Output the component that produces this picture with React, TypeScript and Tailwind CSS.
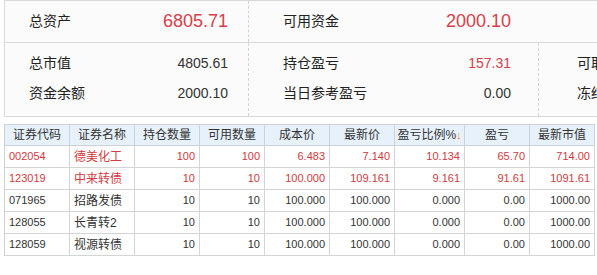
import React from 'react';

interface Position {
  code: string;
  name: string;
  qty: string;
  avail: string;
  cost: string;
  price: string;
  ratio: string;
  pnl: string;
  value: string;
  up: boolean;
}

const positions: Position[] = [
  { code: '002054', name: '德美化工', qty: '100', avail: '100', cost: '6.483', price: '7.140', ratio: '10.134', pnl: '65.70', value: '714.00', up: true },
  { code: '123019', name: '中来转债', qty: '10', avail: '10', cost: '100.000', price: '109.161', ratio: '9.161', pnl: '91.61', value: '1091.61', up: true },
  { code: '071965', name: '招路发债', qty: '10', avail: '10', cost: '100.000', price: '100.000', ratio: '0.000', pnl: '0.00', value: '1000.00', up: false },
  { code: '128055', name: '长青转2', qty: '10', avail: '10', cost: '100.000', price: '100.000', ratio: '0.000', pnl: '0.00', value: '1000.00', up: false },
  { code: '128059', name: '视源转债', qty: '10', avail: '10', cost: '100.000', price: '100.000', ratio: '0.000', pnl: '0.00', value: '1000.00', up: false },
];

const gridCols = 'grid grid-cols-[65px_65px_65px_65px_65px_65px_70px_65px_65px]';

const SummaryLine = ({ label, value, red }: { label: string; value: string; red?: boolean }) => (
  <div className="flex h-[30px] items-center justify-between">
    <span className="text-[14px] text-[#222]">{label}</span>
    <span className={`text-[14px] ${red ? 'text-[#d6404a]' : 'text-[#333]'}`}>{value}</span>
  </div>
);

const App: React.FC = () => {
  return (
    <div
      className="w-[597px] h-[275px] overflow-hidden bg-white"
      style={{ fontFamily: '"Liberation Sans", "Noto Sans CJK SC", sans-serif' }}
    >
      {/* account summary */}
      <div className="ml-[4px] w-[700px] border-l border-t border-b border-[#d9d9d9] bg-[#fbfbfb]">
        <div className="flex h-[42px] border-b border-[#d9d9d9]">
          <div className="flex w-[244px] items-center justify-between border-r border-dashed border-[#d4d4d4] pl-[24px] pr-[20px]">
            <span className="text-[14px] text-[#222]">总资产</span>
            <span className="text-[18px] text-[#d6404a]">6805.71</span>
          </div>
          <div className="flex w-[290px] items-center justify-between pl-[34px] pr-[28px]">
            <span className="text-[14px] text-[#222]">可用资金</span>
            <span className="text-[18px] text-[#d6404a]">2000.10</span>
          </div>
        </div>
        <div className="flex h-[73px]">
          <div className="w-[244px] border-r border-dashed border-[#d4d4d4] pl-[24px] pr-[20px] pt-[5px]">
            <SummaryLine label="总市值" value="4805.61" />
            <SummaryLine label="资金余额" value="2000.10" />
          </div>
          <div className="w-[290px] border-r border-dashed border-[#d4d4d4] pl-[34px] pr-[27px] pt-[5px]">
            <SummaryLine label="持仓盈亏" value="157.31" red />
            <SummaryLine label="当日参考盈亏" value="0.00" />
          </div>
          <div className="pl-[38px] pt-[5px]">
            <div className="flex h-[30px] items-center text-[14px] text-[#222]">可取资金</div>
            <div className="flex h-[30px] items-center text-[14px] text-[#222]">冻结资金</div>
          </div>
        </div>
      </div>

      {/* positions table */}
      <div className="ml-[4px] mt-[7px] w-[591px] border-l border-t border-[#cdd2d8]">
        <div className={`${gridCols} h-[21px] border-b border-[#cdd2d8] bg-[#e7f1fb] text-[12px] text-[#333]`}>
          {['证券代码', '证券名称', '持仓数量', '可用数量', '成本价', '最新价'].map((h) => (
            <div key={h} className="flex items-center justify-center border-r border-[#cdd2d8]">
              {h}
            </div>
          ))}
          <div className="flex items-center justify-center whitespace-nowrap border-r border-[#cdd2d8]">
            盈亏比例%<span className="text-[11px] font-bold text-[#f08a1c]">↓</span>
          </div>
          {['盈亏', '最新市值'].map((h) => (
            <div key={h} className="flex items-center justify-center border-r border-[#cdd2d8]">
              {h}
            </div>
          ))}
        </div>
        {positions.map((p) => {
          const color = p.up ? 'text-[#d23a41]' : 'text-[#333]';
          const num = `flex items-center justify-end border-r border-[#d4d4d4] pr-[4px] text-[11px] ${color}`;
          return (
            <div key={p.code} className={`${gridCols} h-[22px] border-b border-[#d4d4d4]`}>
              <div className={`flex items-center border-r border-[#d4d4d4] pl-[4px] text-[11px] ${color}`}>{p.code}</div>
              <div className={`flex items-center border-r border-[#d4d4d4] pl-[4px] text-[12px] ${color}`}>{p.name}</div>
              <div className={num}>{p.qty}</div>
              <div className={num}>{p.avail}</div>
              <div className={num}>{p.cost}</div>
              <div className={num}>{p.price}</div>
              <div className={num}>{p.ratio}</div>
              <div className={num}>{p.pnl}</div>
              <div className={num}>{p.value}</div>
            </div>
          );
        })}
      </div>
    </div>
  );
};

export default App;
